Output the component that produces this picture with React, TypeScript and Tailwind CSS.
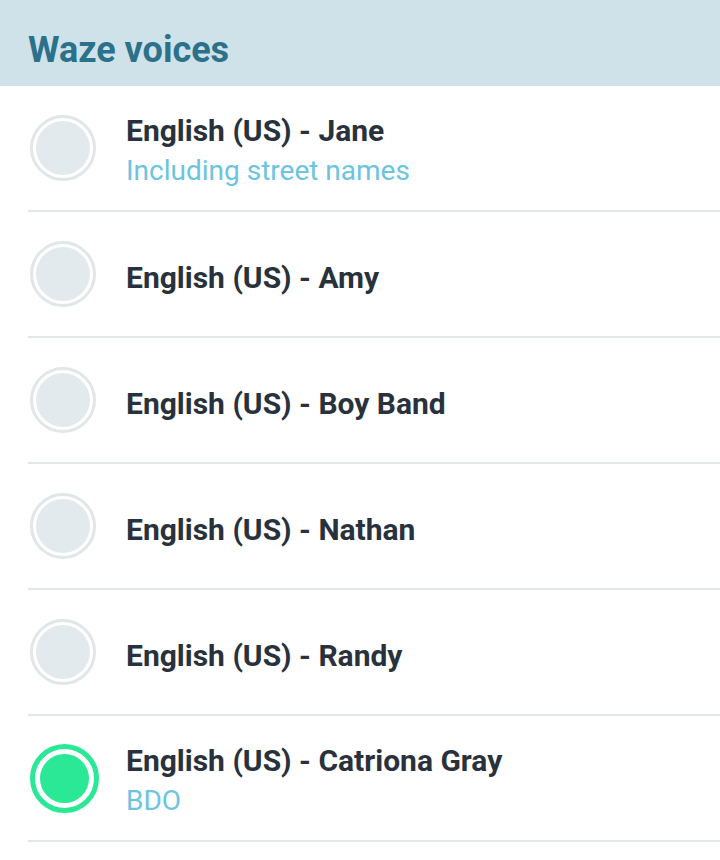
const voices = [
  { name: "English (US) - Jane", sub: "Including street names" },
  { name: "English (US) - Amy" },
  { name: "English (US) - Boy Band" },
  { name: "English (US) - Nathan" },
  { name: "English (US) - Randy" },
  { name: "English (US) - Catriona Gray", sub: "BDO", selected: true },
];

function Radio({ on }: { on?: boolean }) {
  if (on) {
    return (
      <div className="w-[69px] h-[69px] rounded-full border-[5px] border-[#2be897] p-[5px] shrink-0">
        <div className="w-full h-full rounded-full bg-[#2be897]" />
      </div>
    );
  }
  return (
    <div className="w-[66px] h-[66px] rounded-full border-[3px] border-[#e1e6e8] p-[3px] shrink-0">
      <div className="w-full h-full rounded-full bg-[#e3eaee]" />
    </div>
  );
}

export default function App() {
  return (
    <div className="w-[720px] h-[860px] bg-white overflow-hidden" style={{ fontFamily: "Roboto, 'Liberation Sans', sans-serif" }}>
      <div className="h-[86px] bg-[#cfe1e9] flex items-center pl-[28px] pt-[14px]">
        <h1 className="text-[36px] font-bold text-[#2a7189] leading-none">Waze voices</h1>
      </div>
      <div className="pl-[28px]">
        {voices.map((v, i) => (
          <div key={i} className="h-[126px] flex items-center border-b-2 border-[#e3e6e8]">
            <div className="w-[98px] flex items-center pl-[2px]">
              <Radio on={v.selected} />
            </div>
            <div className="flex flex-col pt-[8px]">
              <span className="text-[30px] font-bold text-[#29323c] leading-[38px]">{v.name}</span>
              {v.sub && <span className="text-[28px] text-[#6cc4e0] leading-[42px]">{v.sub}</span>}
            </div>
          </div>
        ))}
      </div>
    </div>
  );
}
